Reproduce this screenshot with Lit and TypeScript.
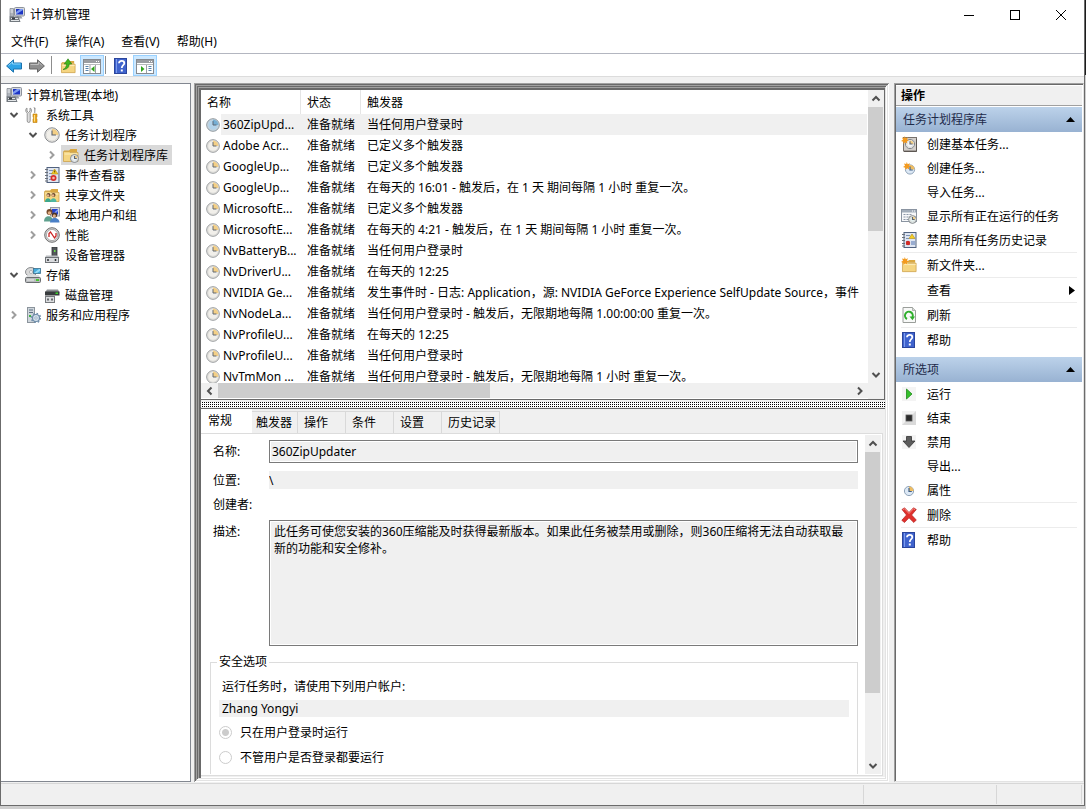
import { LitElement, html, css, svg, nothing } from "lit";
import { customElement, property, state } from "lit/decorators.js";
import { classMap } from "lit/directives/class-map.js";

const clock = (cx: number, cy: number, r: number, face = "#f1efea", wedge = "#f3cf86") => svg`
  <circle cx=${cx} cy=${cy} r=${r} fill=${face} stroke="#85888c" stroke-width="1"/>
  <circle cx=${cx} cy=${cy} r=${r - 1.2} fill="none" stroke="#d3d3d1" stroke-width=".8"/>
  <path d=${`M${cx} ${cy}V${cy - r + 1}A${r - 1} ${r - 1} 0 0 1 ${cx + r - 1} ${cy}Z`} fill=${wedge}/>
  <path d=${`M${cx} ${cy - r * 0.62}V${cy}H${cx + r * 0.55}`} fill="none" stroke="#5c6470" stroke-width="1.1"/>`;

const folder = svg`
  <path d="M1 3.5h5l1.5-1.5H14v3H1z" fill="#d9a842"/>
  <path d="M.5 4.5h5.5l1 1h8v9H.5z" fill="#f5d581" stroke="#cda24b" stroke-width=".8"/>
  <path d="M1.5 7h13" stroke="#fdeebc"/>`;

const star = svg`<path d="M3.8 0l.9 2.2L7 1.300 6 3.500 8 4.500 5.800 5.300 6.300 7.500 4.200 6.300 2.500 8 2.300 5.700 0 5l2-1.200L1 1.600l2.200.5z" fill="#f39a1e"/>`;

const sheet = svg`
  <rect x="3" y=".5" width="12" height="15" fill="#dfe6f2" stroke="#51627f"/>
  <path d="M5 3.500h4M5 6.500h3M5 9.500h3M5 12.500h4" stroke="#7e93b5"/>
  <path d="M1 2.500h3M1 5.500h3M1 8.500h3M1 11.500h3M1 14h3" stroke="#6a6f78"/>`;

const panelWindow = svg`
  <rect x=".5" y="1.500" width="17" height="14" fill="#fff" stroke="#878a8f"/>
  <rect x="1" y="2" width="16" height="3" fill="#9a9da2"/>
  <path d="M13 3.500h1M15 3.500h1" stroke="#fff"/>
  <path d="M1 6.500h16" stroke="#b7babd"/>`;

const icons: Record<string, unknown> = {
  computer: svg`
    <rect x="5.500" y=".5" width="10" height="8.500" rx="1" fill="#d5d8de" stroke="#8d929b"/>
    <rect x="7" y="2" width="7" height="5.500" fill="#1d35c4"/><path d="M7 7.500V5l4-3h3v1z" fill="#7d9bf0"/>
    <path d="M1 1.500h3.500V10H1z" fill="#aeb3ba" stroke="#80858c" stroke-width=".7"/><path d="M1.500 3h2.500M1.500 5h2.500" stroke="#eceef0"/>
    <path d="M8 9h4l1.500 2.500H7z" fill="#9aa0a8"/>
    <path d="M.5 9.500h9l2 5.500H.5z" fill="#73797f"/><path d="M2 11.500h7M2 13.500h8" stroke="#e3e6e8"/>
    <rect x="3" y="10.500" width="3" height="2" fill="#3b3f45"/>`,
  tools: svg`
    <path d="M2 1v3l1.500 1.500L5 4V1c1.700.7 2.300 3.500.2 5.200V14c0 2-3 2-3 0V6.200C0 4.500.5 1.700 2 1z" fill="#dedede" stroke="#838383" stroke-width=".8"/>
    <path d="M8.500 0l2 1-.3 5H9.300V2z" fill="#8b8b8b"/>
    <path d="M8 7h4v3l-.8 1 .8 1v3.500H8V12l.8-1L8 10z" fill="#eaa51c" stroke="#b87b0b" stroke-width=".6"/><path d="M9.500 8v6.500" stroke="#ffe08a"/>`,
  clock: clock(8, 8, 7.2),
  clockBlue: clock(8, 8, 7.2, "#b3d3ea", "#75aed4"),
  clockSmall: svg`<circle cx="8" cy="9" r="4.600" fill="#dce8f5" stroke="#8fa3b8"/><path d="M8 9V4.400A4.600 4.600 0 0 1 12.600 9z" fill="#efbd62"/><path d="M8 6v3.500h2.800" fill="none" stroke="#3f5f86" stroke-width="1.200"/>`,
  folderClock: svg`${folder}${clock(11.5, 11.5, 4, "#e9f1f5")}`,
  events: svg`${sheet}<path d="M10.500 2l3.500 5H7.500z" fill="#f6cf25" stroke="#b08c12" stroke-width=".6"/><path d="M10.700 3.500v2" stroke="#5a4300"/>
    <circle cx="9.500" cy="11" r="3" fill="#d5302c"/><circle cx="9.500" cy="11" r="1.300" fill="#f6b6ac"/>`,
  shared: svg`${folder}<circle cx="4.500" cy="8" r="2" fill="#6d4a2d"/><circle cx="9.500" cy="8" r="2" fill="#6d4a2d"/><circle cx="4" cy="8.500" r="1.200" fill="#e8b78c"/><circle cx="9" cy="8.500" r="1.200" fill="#e8b78c"/>
    <path d="M1 15c0-5 6-5 6 0z" fill="#3ba88c"/><path d="M6.500 15c0-5 6-5 6 0z" fill="#4fb7a0"/>`,
  users: svg`
    <rect x="6.500" y=".5" width="9" height="8.500" fill="#d8dae0" stroke="#989ca5"/><rect x="8" y="2" width="6" height="5.500" fill="#2643cf"/><path d="M8 7.500l6-5.500v2L10 7.500z" fill="#88a2f2"/>
    <circle cx="5.500" cy="5" r="3" fill="#75492a"/><circle cx="5.500" cy="6" r="1.800" fill="#e2ae84"/><circle cx="10.500" cy="8" r="2.600" fill="#4d3526"/><circle cx="10.300" cy="8.800" r="1.600" fill="#e2ae84"/>
    <path d="M0 14.500c0-7 9-7 9 0z" fill="#5fa08e"/><path d="M6 15.500c0-6 9.500-6 9.500 0z" fill="#4a7fc6"/>`,
  performance: svg`
    <circle cx="8" cy="8" r="7.300" fill="#d4d4d4" stroke="#6f6f6f"/><circle cx="8" cy="8" r="5.600" fill="#fff" stroke="#929292" stroke-width=".7"/>
    <path d="M5 10V6.500L6.500 5l4 6L12 9V6" fill="none" stroke="#cb2424" stroke-width="1.300"/>`,
  device: svg`
    <rect x="8" y=".5" width="5" height="9" fill="#54585c" stroke="#303336" stroke-width=".8"/><rect x="10" y="3" width="1.500" height="2" fill="#6be04b"/>
    <path d="M2 8.500h12l1.500 2.500H1z" fill="#b9bcc0"/><rect x="1.500" y="10.500" width="13" height="5" fill="#d9dbde" stroke="#6f7377"/><path d="M4 12v2M11.500 12v2" stroke="#2e3134" stroke-width="1.500"/>`,
  storage: svg`
    <ellipse cx="6" cy="5" rx="5.500" ry="4.500" fill="#d8d8d8" stroke="#8a8d90"/><circle cx="6" cy="5" r="1.500" fill="#fff" stroke="#8a8d90" stroke-width=".6"/>
    <rect x="8.500" y="1.500" width="7" height="5" fill="#43a9dc" stroke="#3c718d" stroke-width=".8"/><path d="M9 6l5-4h1v2l-3 2z" fill="#96dbf5"/>
    <path d="M2.500 8h11l2 3H.5z" fill="#d9dcdd"/><rect x=".5" y="10.500" width="15" height="5" rx="1" fill="#b9bcbe" stroke="#6a6d70"/><path d="M2 13h7" stroke="#eee"/><rect x="11" y="12" width="3" height="2" fill="#49c832"/>`,
  disk: svg`
    <path d="M3 2.500h11l1.500 3H1z" fill="#8b8f92"/><rect x="1" y="4.500" width="14.500" height="4" fill="#383b3d"/><rect x="11.500" y="5.500" width="2.500" height="1.500" fill="#3bd82c"/>
    <rect x="1.500" y="9.500" width="9" height="6" fill="#dcdee0" stroke="#777a7e"/><path d="M4 11.500v2M8 11.500v2" stroke="#36393c" stroke-width="1.400"/>`,
  services: svg`
    <rect x="2.500" y=".5" width="7" height="15" fill="#cfd6dc" stroke="#8b949c"/><path d="M4 3h4M4 5.500h4" stroke="#5d7182" stroke-width="1.200"/><rect x="4" y="8" width="2" height="2" fill="#3db340"/>
    <circle cx="11" cy="11" r="3.500" fill="#d5e2ed" stroke="#6d8ba8" stroke-width="1.200"/><circle cx="11" cy="11" r="4.600" fill="none" stroke="#6d8ba8" stroke-width="1.400" stroke-dasharray="1.600 2"/><circle cx="11" cy="11" r="1.200" fill="#fff" stroke="#6d8ba8" stroke-width=".6"/>`,
  help: svg`
    <rect x="1.500" y=".5" width="12" height="15" fill="#3f63cd" stroke="#2b459c"/><path d="M3.500 1v14" stroke="#7d9cec"/>
    <path d="M6 5.300c0-3.300 5.300-3 5.300-.1 0 2.100-2.500 2-2.500 4.800" fill="none" stroke="#fff" stroke-width="1.800"/><rect x="7.800" y="11.500" width="2" height="2" fill="#fff"/>`,
  wizard: svg`
    <rect x="2.500" y="1.500" width="13" height="13.500" fill="#d3cfcb" stroke="#77716c"/><path d="M3 15.500h12.500V3" fill="none" stroke="#5d5752"/>${clock(9, 8, 4.6, "#f4f6f7")}${star}`,
  newTask: svg`<circle cx="9" cy="9.500" r="4.600" fill="#dce8f5" stroke="#8fa3b8"/><path d="M9 9.500V4.900a4.600 4.600 0 0 1 4.600 4.600z" fill="#efbd62"/><path d="M9 6.500V10h2.800" fill="none" stroke="#3f5f86" stroke-width="1.200"/><g transform="translate(2 2)">${star}</g>`,
  running: svg`
    <rect x=".5" y="1.500" width="15" height="12" fill="#f7f8fa" stroke="#8a94a1"/><rect x="1" y="2" width="14" height="2.500" fill="#a2adba"/><path d="M11 3h1M13 3h1" stroke="#fff"/>
    <path d="M2.500 6.500h2M5.500 6.500h2M8.500 6.500h2M2.500 9h2M5.500 9h2M2.500 11.500h2M5.500 11.500h2" stroke="#8b97a6"/>${clock(11.5, 11.5, 3.9, "#e4f0ef")}`,
  history: svg`${sheet}<path d="M11 2l3 4.500H8z" fill="#f6cf25" stroke="#b08c12" stroke-width=".6"/><circle cx="7" cy="11" r="2.200" fill="#d32b24"/><path d="M10 10h4M10 12h4" stroke="#5272ae"/>`,
  newFolder: svg`<g transform="translate(1 1) scale(.94)">${folder}</g>${star}`,
  refresh: svg`
    <path d="M2 .5h9.500l3 3v12H2z" fill="#f8f9f8" stroke="#9a9e9a"/><path d="M11.500.5v3h3" fill="#d7dad7" stroke="#9a9e9a" stroke-width=".7"/>
    <path d="M6 12A3.900 3.900 0 1 1 11.500 10" fill="none" stroke="#2fae2c" stroke-width="2"/><path d="M8.500 9.500h5.500l-2.500 3.700z" fill="#2fae2c"/>`,
  run: svg`<rect x="1" y="1" width="14" height="14" fill="#f4f4f4"/><path d="M5.500 3v10l5.500-5z" fill="#35c12c" stroke="#218a1b" stroke-width=".8"/>`,
  stop: svg`<rect x="1" y="1" width="14" height="14" fill="#dadada"/><path d="M1 1h14L1 15z" fill="#f2f2f2"/><rect x="5" y="5" width="6" height="6" fill="#2b2b2b" stroke="#5a5a5a" stroke-width=".8"/>`,
  disable: svg`<rect x="1" y="1" width="14" height="14" fill="#f4f4f4"/><path d="M5.500 2.500h5V7H14l-6 6.500L2 7h3.500z" fill="#5c5c5c" stroke="#343434" stroke-width=".8"/>`,
  remove: svg`<path d="M1 2.500L3.500.8 8 5.500 12.500.8 15.300 2.500 10.600 8l4.700 5-2.500 2.500L8 10.800 3.500 15.500.8 13.300 5.500 8z" fill="#e0302c" stroke="#b3211f" stroke-width=".7"/><path d="M2 2.500l1.500-.8L8 6.500l4.500-4.800 1.500.9" fill="none" stroke="#f58d85"/>`,
  up: svg`<g transform="translate(1 1) scale(.94)">${folder}</g><path d="M3 11.500c2.500-1 3.500-3 3.500-5.500H4.200L8 .8 11.800 6H9.200c0 3.300-2.200 5.500-6.200 5.500z" fill="#42b61f" stroke="#2c7d17" stroke-width=".6"/>`,
};

function icon(name: string, size = 16) {
  return html`<svg class="icon" width=${size} height=${size} viewBox="0 0 16 16" aria-hidden="true">${icons[name] ?? nothing}</svg>`;
}

const chevron = (d: string) => html`<svg width="10" height="10" viewBox="0 0 10 10" aria-hidden="true"><path d=${d} fill="none" stroke="#505050" stroke-width="2"/></svg>`;
const chevrons = {
  up: chevron("M1.500 6.500L5 3l3.500 3.500"),
  down: chevron("M1.500 3L5 6.500 8.500 3"),
  left: chevron("M6.500 1.500L3 5l3.500 3.500"),
  right: chevron("M3 1.500L6.500 5 3 8.500"),
};

const base = css`
  * { box-sizing: border-box; }
  button, input, textarea { font: inherit; color: inherit; margin: 0; border-radius: 0; }
  button { background: none; border: 0; padding: 0; text-align: left; white-space: nowrap; }
  svg { display: block; flex: none; }
`;

@customElement("scroll-track")
class ScrollTrack extends LitElement {
  @property({ type: Boolean, reflect: true }) horizontal = false;
  @property({ type: Number }) thumb = 50;

  static styles = [base, css`
    :host { display: flex; flex-direction: column; background: #f0f0f0; width: 16px; }
    :host([horizontal]) { flex-direction: row; width: auto; height: 15px; }
    .arrow { flex: none; display: grid; place-items: center; height: 17px; width: 15px; }
    :host([horizontal]) .arrow { width: 17px; height: 15px; }
    .track { flex: 1; min-width: 0; min-height: 0; }
    .thumb { background: #cdcdcd; width: 15px; height: 15px; }
  `];

  render() {
    const size = this.horizontal ? `width:${this.thumb}%` : `height:${this.thumb}%`;
    return html`
      <button class="arrow" aria-label="向前滚动">${this.horizontal ? chevrons.left : chevrons.up}</button>
      <div class="track"><div class="thumb" style=${size}></div></div>
      <button class="arrow" aria-label="向后滚动">${this.horizontal ? chevrons.right : chevrons.down}</button>`;
  }
}

interface TreeNode { level: number; icon: string; label: string; open?: boolean; }

const tree: TreeNode[] = [
  { level: 0, icon: "computer", label: "计算机管理(本地)" },
  { level: 1, icon: "tools", label: "系统工具", open: true },
  { level: 2, icon: "clock", label: "任务计划程序", open: true },
  { level: 3, icon: "folderClock", label: "任务计划程序库", open: false },
  { level: 2, icon: "events", label: "事件查看器", open: false },
  { level: 2, icon: "shared", label: "共享文件夹", open: false },
  { level: 2, icon: "users", label: "本地用户和组", open: false },
  { level: 2, icon: "performance", label: "性能", open: false },
  { level: 2, icon: "device", label: "设备管理器" },
  { level: 1, icon: "storage", label: "存储", open: true },
  { level: 2, icon: "disk", label: "磁盘管理" },
  { level: 1, icon: "services", label: "服务和应用程序", open: false },
];

@customElement("console-tree")
class ConsoleTree extends LitElement {
  @state() private selected = 3;

  static styles = [base, css`
    :host { display: block; background: #fff; border: 1px solid #828790; border-left: 0; padding: 1px 0 0 5px; overflow: hidden; }
    .node { display: flex; height: 20px; align-items: center; }
    .indent { flex: none; }
    .twisty { flex: none; width: 19px; height: 20px; display: flex; align-items: center; padding-left: 3px; }
    .twisty.closed { opacity: .55; }
    .label { display: flex; align-items: center; height: 20px; gap: 5px; padding: 0 4px 0 2px; margin-left: -2px; }
    .label.selected { background: #d9d9d9; }
  `];

  render() {
    return html`${tree.map((node, i) => html`
      <div class="node">
        <span class="indent" style=${`width:${Math.max(0, node.level - 1) * 19}px`}></span>
        ${node.level === 0 ? nothing : html`<span class=${classMap({ twisty: true, closed: node.open === false })}>
          ${node.open === undefined ? nothing : node.open ? chevrons.down : chevrons.right}</span>`}
        <button class=${classMap({ label: true, selected: i === this.selected })} @click=${() => (this.selected = i)}>
          ${icon(node.icon)}<span>${node.label}</span>
        </button>
      </div>`)}`;
  }
}

const tasks: [string, string][] = [
  ["360ZipUpd...", "当任何用户登录时"],
  ["Adobe Acr...", "已定义多个触发器"],
  ["GoogleUp...", "已定义多个触发器"],
  ["GoogleUp...", "在每天的 16:01 - 触发后，在 1 天 期间每隔 1 小时 重复一次。"],
  ["MicrosoftE...", "已定义多个触发器"],
  ["MicrosoftE...", "在每天的 4:21 - 触发后，在 1 天 期间每隔 1 小时 重复一次。"],
  ["NvBatteryB...", "当任何用户登录时"],
  ["NvDriverU...", "在每天的 12:25"],
  ["NVIDIA Ge...", "发生事件时 - 日志: Application，源: NVIDIA GeForce Experience SelfUpdate Source，事件"],
  ["NvNodeLa...", "当任何用户登录时 - 触发后，无限期地每隔 1.00:00:00 重复一次。"],
  ["NvProfileU...", "在每天的 12:25"],
  ["NvProfileU...", "当任何用户登录时"],
  ["NvTmMon ...", "当任何用户登录时 - 触发后，无限期地每隔 1 小时 重复一次。"],
];

@customElement("task-list")
class TaskList extends LitElement {
  @state() private selected = 0;

  static styles = [base, css`
    :host { display: grid; grid-template: minmax(0, 1fr) 16px / minmax(0, 1fr) 16px; background: #fff; border-right: 1px solid #696969; border-bottom: 1px solid #696969; }
    .view { overflow: hidden; padding-right: 1px; }
    .rows { width: 100%; table-layout: fixed; border-collapse: separate; border-spacing: 0; }
    .name { width: 100px; }
    .status { width: 60px; }
    th, td { padding: 0 0 0 6px; height: 21px; font-weight: 400; text-align: left; white-space: nowrap; overflow: hidden; }
    th { height: 24px; border-right: 1px solid #e5e5e5; }
    th:last-child { border-right: 0; }
    td:first-child { padding-left: 5px; }
    .task { display: flex; align-items: center; gap: 3px; }
    .selected { background: linear-gradient(90deg, #fff 20px, #f0f0f0 20px); }
    .across { grid-column: 1; }
    .corner { background: #f0f0f0; }
  `];

  render() {
    return html`
      <div class="view">
        <table class="rows">
          <thead><tr><th class="name">名称</th><th class="status">状态</th><th>触发器</th></tr></thead>
          <tbody>${tasks.map(([name, trigger], i) => html`
            <tr class=${classMap({ selected: i === this.selected })} @click=${() => (this.selected = i)}>
              <td><span class="task">${icon(i === this.selected ? "clockBlue" : "clock", 14)}${name}</span></td>
              <td>准备就绪</td><td>${trigger}</td>
            </tr>`)}</tbody>
        </table>
      </div>
      <scroll-track .thumb=${48}></scroll-track>
      <scroll-track class="across" horizontal .thumb=${43}></scroll-track>
      <div class="corner"></div>`;
  }
}

@customElement("task-details")
class TaskDetails extends LitElement {
  @state() private tab = 0;

  static styles = [base, css`
    :host { display: flex; flex-direction: column; background: #f0f0f0; padding: 0 2px 0 0; min-height: 0; }
    .tabs { display: flex; align-items: flex-end; height: 24px; flex: none; }
    .tab { height: 22px; padding: 0 3px 0 6px; min-width: 48px; border: 1px solid #d9d9d9; border-left: 0; border-bottom: 0; }
    .tab.first { padding-left: 7px; min-width: 51px; }
    .tab.second { min-width: 46px; padding-left: 4px; }
    .tab.active { height: 24px; background: #fff; padding-bottom: 3px; border-color: #fff; }
    .page { flex: 1; min-height: 0; display: flex; background: #fff; border: 1px solid #dcdcdc; border-left: 0; padding: 1px 1px 1px 0; }
    .form { flex: 1; min-width: 0; overflow: hidden; padding: 5px 7px 0 9px; }
    .fields { display: grid; grid-template-columns: 56px minmax(0, 1fr); row-gap: 8px; padding-left: 3px; align-items: center; }
    .box { width: 100%; border: 1px solid #7a7a7a; background: #f0f0f0; box-shadow: inset 0 0 0 1px #fff; padding: 0 2px; height: 23px; outline: 0; display: block; }
    .flat { width: 100%; border: 0; background: #f0f0f0; height: 18px; padding: 0; outline: 0; display: block; }
    .author { height: 15px; }
    .fields label { line-height: 15px; }
    .notes { height: 126px; resize: none; padding: 2px 4px; line-height: 17px; overflow: hidden; }
    .top { align-self: start; padding-top: 4px; }
    fieldset { margin: 8px 0 0; border: 1px solid #dcdcdc; padding: 9px 8px 24px; min-width: 0; }
    legend { height: 16px; line-height: 16px; padding: 0 2px; margin-left: -2px; }
    .account { display: block; padding-left: 3px; height: 16px; line-height: 16px; margin-bottom: 5px; }
    .user { height: 17px; padding-left: 3px; }
    .choice { display: flex; align-items: center; gap: 8px; height: 17px; margin-top: 7px; }
    .choice + .choice { margin-top: 8px; }
    .radio { appearance: none; width: 13px; height: 13px; border: 1px solid #ccc; border-radius: 50%; background: #fff; }
    .radio:checked { background: radial-gradient(circle, #ccc 3px, #fff 4px); }
  `];

  render() {
    const tabs = ["常规", "触发器", "操作", "条件", "设置", "历史记录"];
    return html`
      <div class="tabs" role="tablist">
        ${tabs.map((name, i) => html`<button role="tab" aria-selected=${i === this.tab}
          class=${classMap({ tab: true, first: i === 0, second: i === 1, active: i === this.tab })}
          @click=${() => (this.tab = i)}>${name}</button>`)}
      </div>
      <div class="page">
        <div class="form">
          <div class="fields">
            <label for="name">名称:</label><input id="name" class="box" readonly .value=${"360ZipUpdater"}>
            <label for="place">位置:</label><input id="place" class="flat" readonly .value=${"\\"}>
            <label for="author">创建者:</label><output id="author" class="author"></output>
            <label for="notes" class="top">描述:</label>
            <textarea id="notes" class="box notes" readonly .value=${"此任务可使您安装的360压缩能及时获得最新版本。如果此任务被禁用或删除，则360压缩将无法自动获取最新的功能和安全修补。"}></textarea>
          </div>
          <fieldset>
            <legend>安全选项</legend>
            <label class="account" for="user">运行任务时，请使用下列用户帐户:</label>
            <input id="user" class="flat user" readonly .value=${"Zhang Yongyi"}>
            <label class="choice"><input class="radio" type="radio" name="logon" checked>只在用户登录时运行</label>
            <label class="choice"><input class="radio" type="radio" name="logon">不管用户是否登录都要运行</label>
          </fieldset>
        </div>
        <scroll-track .thumb=${79}></scroll-track>
      </div>`;
  }
}

type Action = { icon?: string; label: string; line?: boolean; more?: boolean };
const groups: { title: string; actions: Action[] }[] = [
  { title: "任务计划程序库", actions: [
    { icon: "wizard", label: "创建基本任务..." },
    { icon: "newTask", label: "创建任务..." },
    { label: "导入任务..." },
    { icon: "running", label: "显示所有正在运行的任务" },
    { icon: "history", label: "禁用所有任务历史记录" },
    { icon: "newFolder", label: "新文件夹...", line: true },
    { label: "查看", line: true, more: true },
    { icon: "refresh", label: "刷新", line: true },
    { icon: "help", label: "帮助", line: true },
  ] },
  { title: "所选项", actions: [
    { icon: "run", label: "运行" },
    { icon: "stop", label: "结束" },
    { icon: "disable", label: "禁用" },
    { label: "导出..." },
    { icon: "clockSmall", label: "属性" },
    { icon: "remove", label: "删除", line: true },
    { icon: "help", label: "帮助", line: true },
  ] },
];

@customElement("actions-pane")
class ActionsPane extends LitElement {
  static styles = [base, css`
    :host { display: block; background: #fff; border: 1px solid #a0a0a0; border-right-color: #e3e3e3; border-bottom-color: #e3e3e3; box-shadow: inset 1px 1px 0 #696969; padding: 2px 1px 0; overflow: hidden; }
    .heading { margin: 0 0 1px; font-size: 12px; line-height: 19px; height: 20px; padding-left: 5px; background: #f0f0f0; border-bottom: 1px solid #a0a0a0; font-weight: 700; }
    .title { display: flex; width: 100%; height: 25px; align-items: center; justify-content: space-between; padding: 0 7px; background: linear-gradient(#bcd2ea, #98b2d2); color: #1e2b4a; }
    .group { padding-bottom: 5px; }
    .rule { height: 1px; margin: 0 5px; background: #ececec; }
    .action { display: flex; align-items: center; width: 100%; height: 24px; padding: 0 7px 0 5px; gap: 10px; }
    .name { flex: 1; }
  `];

  render() {
    return html`
      <h2 class="heading">操作</h2>
      ${groups.map(group => html`<section class="group">
        <button class="title">${group.title}<svg width="9" height="5" viewBox="0 0 9 5"><path fill="#000" d="M0 5l4.500-5L9 5z"/></svg></button>
        ${group.actions.map(a => html`
          ${a.line ? html`<div class="rule"></div>` : nothing}
          <button class="action">${icon(a.icon ?? "")}<span class="name">${a.label}</span>
            ${a.more ? html`<svg width="6" height="9" viewBox="0 0 6 9"><path d="M0 0l6 4.500L0 9z"/></svg>` : nothing}
          </button>`)}
      </section>`)}`;
  }
}

@customElement("app-root")
class AppRoot extends LitElement {
  static styles = [base, css`
    :host { display: block; box-sizing: border-box; height: 100vh; min-height: 480px; padding: 0 1px 3px 0; font: 12px/17px "Noto Sans", "Noto Sans CJK SC", sans-serif; color: #000; overflow: hidden;
      background: linear-gradient(#1c1c1c, #1c1c1c) right top / 1px 75px no-repeat, #cfcfcf; }
    .window { height: 100%; display: flex; flex-direction: column; background: #f0f0f0; border: 1px solid #6b6b6b; border-top: 0; }
    .caption { flex: none; display: flex; align-items: center; height: 29px; background: #fff; padding-left: 8px; gap: 5px; }
    .caption h1 { flex: 1; margin: 0; font-size: 12px; font-weight: 400; line-height: 17px; }
    .controls { display: flex; }
    .control { width: 46px; height: 29px; display: grid; place-items: center; }
    .menu { flex: none; display: flex; gap: 1px; height: 25px; background: #fff; border-bottom: 1px solid #b3b6c0; padding-left: 2px; }
    .menu button { padding: 0 8px; }
    .tools { flex: none; display: flex; align-items: flex-end; height: 23px; background: #fff; border-bottom: 1px solid #dcdcdc; padding-left: 1px; }
    .tool { display: grid; place-items: center; width: 24px; height: 21px; }
    .tool.nav { width: 23px; }
    .tool.pressed { background: #cce8ff; border: 1px solid #99d1ff; }
    .bar { width: 1px; height: 18px; background: #8d8d8d; margin: 0 3px 2px 1px; }
    .bar.wide { margin: 0 4px 2px 3px; }
    .body { flex: 1; min-height: 0; display: grid; grid-template-columns: 190px minmax(0, 1fr) 190px; column-gap: 3px; padding: 6px 0 0; }
    .centre { min-width: 0; min-height: 0; display: flex; flex-direction: column; padding: 7px 4px 6px 7px; margin-right: 2px; background: #f0f0f0;
      box-shadow: inset 1px 1px 0 #a0a0a0, inset -1px -1px 0 #fff, inset 2px 2px 0 #696969, inset -2px -2px 0 #e3e3e3,
        inset 3px 3px 0 #a0a0a0, inset -3px -3px 0 #fff, inset 4px 4px 0 #696969, inset -4px -4px 0 #e3e3e3,
        inset 5px 5px 0 #a0a0a0, inset 6px 6px 0 #696969, inset 7px 7px 0 #696969, inset 0 -5px 0 #fff; }
    .list { flex: 0 1 310px; min-height: 0; }
    .splitter { flex: none; height: 9px; border-bottom: 1px solid #696969; background: conic-gradient(#000 25%, #fff 0) 0 0 / 2px 2px content-box, #f0f0f0; padding: 2px 0 1px; }
    .details { flex: 1; }
    .statusbar { flex: none; display: grid; grid-template-columns: minmax(0, 1fr) 133px 85px; height: 22px; margin-top: 1px; border-top: 1px solid #d7d7d7; padding: 1px 2px 1px 0; }
    .statusbar span { border-right: 1px solid #d7d7d7; }
  `];

  render() {
    return html`
      <main class="window">
        <header class="caption">
          ${icon("computer")}<h1>计算机管理</h1>
          <div class="controls">
            <button class="control" aria-label="最小化"><svg width="10" height="10"><path d="M0 5.500h10" stroke="#000"/></svg></button>
            <button class="control" aria-label="最大化"><svg width="10" height="10"><rect x=".5" y=".5" width="9" height="9" fill="none" stroke="#000"/></svg></button>
            <button class="control" aria-label="关闭"><svg width="10" height="10"><path d="M0 0l10 10M10 0L0 10" stroke="#000"/></svg></button>
          </div>
        </header>
        <nav class="menu">${["文件(F)", "操作(A)", "查看(V)", "帮助(H)"].map(m => html`<button>${m}</button>`)}</nav>
        <div class="tools" role="toolbar">
          <button class="tool nav" aria-label="后退"><svg width="16" height="14" viewBox="0 0 16 14"><path d="M.6 7L7.500.8V4h8v6h-8v3.200z" fill="#2ea3e6" stroke="#1b72ae"/><path d="M2.500 6.500l4-3.500v2h8" fill="none" stroke="#8fd6fb"/></svg></button>
          <button class="tool nav" aria-label="前进"><svg width="16" height="14" viewBox="0 0 16 14"><path d="M15.400 7L8.500.8V4h-8v6h8v3.200z" fill="#8e8e8e" stroke="#666"/><path d="M1.500 5.500h8V3l3.500 3.500" fill="none" stroke="#bdbdbd"/></svg></button>
          <span class="bar wide"></span>
          <button class="tool" aria-label="向上">${icon("up")}</button>
          <button class="tool pressed" aria-label="控制台树"><svg width="18" height="16" viewBox="0 0 18 16">${panelWindow}<path d="M2.500 8.500h3M2.500 10.500h3M2.500 12.500h3" stroke="#5682ac"/><path d="M7 7v8M12.500 7v8" stroke="#9da0a4"/><path d="M11.500 8v6l-3.500-3z" fill="#31a51e"/></svg></button>
          <span class="bar"></span>
          <button class="tool" aria-label="帮助">${icon("help")}</button>
          <button class="tool pressed" aria-label="操作窗格"><svg width="18" height="16" viewBox="0 0 18 16">${panelWindow}<path d="M12.500 8.500h3M12.500 10.500h3M12.500 12.500h3" stroke="#5682ac"/><path d="M10.500 7v8" stroke="#9da0a4"/><path d="M5 8v6l3.500-3z" fill="#31a51e"/></svg></button>
        </div>
        <div class="body">
          <console-tree></console-tree>
          <div class="centre">
            <task-list class="list"></task-list>
            <div class="splitter" role="separator"></div>
            <task-details class="details"></task-details>
          </div>
          <actions-pane></actions-pane>
        </div>
        <footer class="statusbar"><span></span><span></span><span></span></footer>
      </main>`;
  }
}
